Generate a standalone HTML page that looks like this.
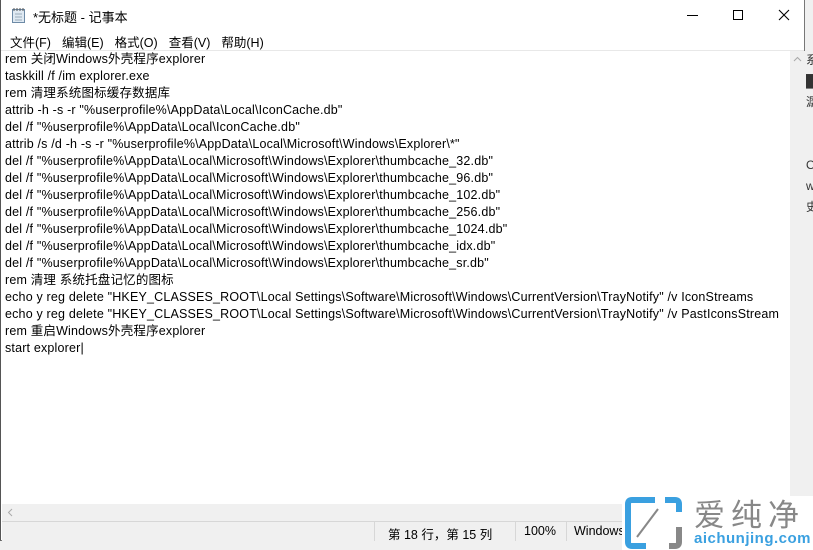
<!DOCTYPE html>
<html><head><meta charset="utf-8"><style>
body{margin:0;width:813px;height:550px;overflow:hidden;background:#f0f0f0;font-family:"Liberation Sans","Noto Sans CJK SC",sans-serif;position:relative}
.win{position:absolute;left:0;top:0;width:805px;height:541px;background:#fff;border-left:1px solid #555;border-right:1px solid #777;border-bottom:1px solid #777;box-sizing:border-box}
.title{position:absolute;left:32px;top:7px;font-size:13px;color:#000}
.menu{position:absolute;left:9px;top:32px;font-size:12.5px;color:#000;white-space:nowrap}
.menu span{margin-right:11px}
.sep{position:absolute;left:0;right:0;top:50px;height:1px;background:#e8e8e8}
.text{position:absolute;left:4px;top:51px;font-size:12.5px;line-height:17px;color:#000;white-space:pre;letter-spacing:0.18px}
.vs{position:absolute;left:789px;top:51px;width:15px;height:453px;background:#f0f0f0}
.hs{position:absolute;left:1px;top:504px;width:788px;height:17px;background:#f0f0f0}
.sb{position:absolute;left:1px;top:521px;width:803px;height:19px;background:#f0f0f0;border-top:1px solid #d7d7d7;font-size:12.5px}
.right{position:absolute;left:806px;top:50px;font-size:12px;color:#333;line-height:21px}
</style></head><body>
<div class="right">系<br>█<br>潺<br><br><br>O<br>w<br>史</div>
<div class="win">
<svg style="position:absolute;left:10px;top:7px" width="16" height="17"><rect x="1.5" y="2.5" width="12" height="13" fill="#dfe9f2" stroke="#6d8aa6"/><path d="M3 1v3M6 1v3M9 1v3M12 1v3" stroke="#555"/><path d="M4 7h7M4 10h7M4 13h7" stroke="#9ab"/></svg>
<div class="title">*无标题 - 记事本</div>
<svg style="position:absolute;left:680px;top:9px" width="120" height="14"><path d="M6 6.5h11" stroke="#000"/><rect x="52.5" y="1.5" width="9" height="9" fill="none" stroke="#000"/><path d="M98 1l10 10M108 1l-10 10" stroke="#000" stroke-width="1.1"/></svg>
<div class="menu"><span>文件(F)</span><span>编辑(E)</span><span>格式(O)</span><span>查看(V)</span><span>帮助(H)</span></div>
<div class="sep"></div>
<div class="text">rem 关闭Windows外壳程序explorer
taskkill /f /im explorer.exe
rem 清理系统图标缓存数据库
attrib -h -s -r "%userprofile%\AppData\Local\IconCache.db"
del /f "%userprofile%\AppData\Local\IconCache.db"
attrib /s /d -h -s -r "%userprofile%\AppData\Local\Microsoft\Windows\Explorer\*"
del /f "%userprofile%\AppData\Local\Microsoft\Windows\Explorer\thumbcache_32.db"
del /f "%userprofile%\AppData\Local\Microsoft\Windows\Explorer\thumbcache_96.db"
del /f "%userprofile%\AppData\Local\Microsoft\Windows\Explorer\thumbcache_102.db"
del /f "%userprofile%\AppData\Local\Microsoft\Windows\Explorer\thumbcache_256.db"
del /f "%userprofile%\AppData\Local\Microsoft\Windows\Explorer\thumbcache_1024.db"
del /f "%userprofile%\AppData\Local\Microsoft\Windows\Explorer\thumbcache_idx.db"
del /f "%userprofile%\AppData\Local\Microsoft\Windows\Explorer\thumbcache_sr.db"
rem 清理 系统托盘记忆的图标
echo y reg delete "HKEY_CLASSES_ROOT\Local Settings\Software\Microsoft\Windows\CurrentVersion\TrayNotify" /v IconStreams
echo y reg delete "HKEY_CLASSES_ROOT\Local Settings\Software\Microsoft\Windows\CurrentVersion\TrayNotify" /v PastIconsStream
rem 重启Windows外壳程序explorer
start explorer|</div>
<div class="vs"><svg style="position:absolute;left:3px;top:5px" width="9" height="6"><path d="M1 5l3.5-3.5L8 5" stroke="#aaa" fill="none"/></svg></div>
<div class="hs"><svg style="position:absolute;left:5px;top:4px" width="6" height="9"><path d="M5 1L1.5 4.5 5 8" stroke="#aaa" fill="none"/></svg></div>
<div class="sb">
<div style="position:absolute;left:372px;top:0;width:1px;height:19px;background:#d7d7d7"></div>
<div style="position:absolute;left:386px;top:2px">第 18 行，第 15 列</div>
<div style="position:absolute;left:513px;top:0;width:1px;height:19px;background:#d7d7d7"></div>
<div style="position:absolute;left:522px;top:2px">100%</div>
<div style="position:absolute;left:564px;top:0;width:1px;height:19px;background:#d7d7d7"></div>
<div style="position:absolute;left:572px;top:2px">Windows</div>
</div>
</div>
<div style="position:absolute;left:622px;top:496px;width:191px;height:54px;background:#fff"></div>
<svg style="position:absolute;left:625px;top:497px" width="60" height="52"><path d="M30 3H7Q3 3 3 7v38q0 4 4 4h14" stroke="#3aa0e0" stroke-width="6" fill="none"/><path d="M40 3h10q4 0 4 4v8" stroke="#3aa0e0" stroke-width="6" fill="none"/><path d="M54 30v15q0 4-4 4h-6" stroke="#888" stroke-width="6" fill="none"/><path d="M12 40L33 12" stroke="#888" stroke-width="2"/></svg>
<div style="position:absolute;left:694px;top:496px;font-size:31px;color:#888;letter-spacing:6px;font-family:'Noto Sans CJK SC',sans-serif;line-height:34px;white-space:nowrap">爱纯净</div>
<div style="position:absolute;left:694px;top:530px;font-size:15px;color:#3aa0e0;font-weight:bold;letter-spacing:0.5px;white-space:nowrap">aichunjing.com</div>
</body></html>
